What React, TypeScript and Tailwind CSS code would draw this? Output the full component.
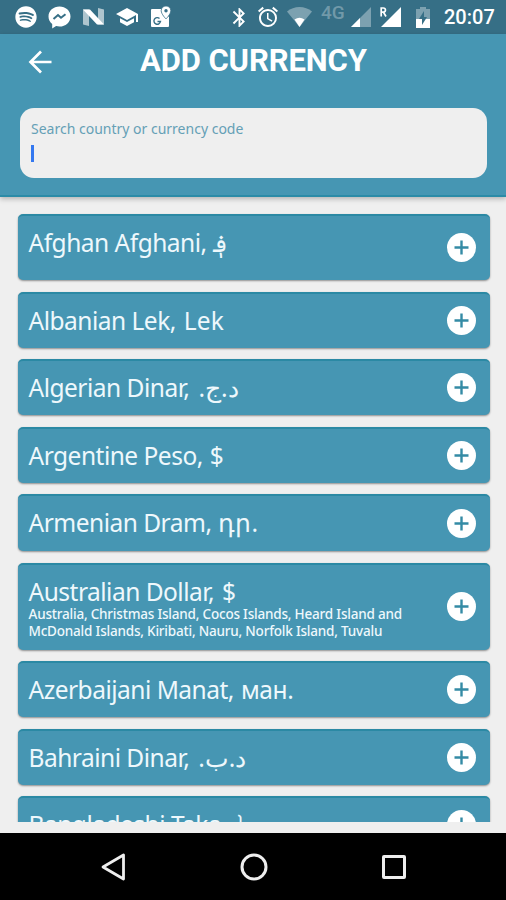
import { FaSpotify } from "react-icons/fa"
import { MdAlarm, MdBluetooth, MdSchool } from "react-icons/md"
import clsx from "clsx"

interface Currency {
  name: string
  symbol: string
  height: string
  symbolStyle?: string
  countries?: string[]
}

const CURRENCIES: Currency[] = [
  { name: "Afghan Afghani,", symbol: "؋", height: "h-[66px]", symbolStyle: "-ml-[1px]" },
  { name: "Albanian Lek,", symbol: "Lek", height: "h-14", symbolStyle: "ml-[1px] tracking-[0.2px]" },
  { name: "Algerian Dinar,", symbol: ".د.ج", height: "h-14", symbolStyle: "ml-[2px] tracking-[0.7px]" },
  { name: "Argentine Peso,", symbol: "$", height: "h-14" },
  { name: "Armenian Dram,", symbol: "դր.", height: "h-[57px]" },
  {
    name: "Australian Dollar,",
    symbol: "$",
    height: "h-[87px]",
    symbolStyle: "ml-[1px]",
    countries: [
      "Australia, Christmas Island, Cocos Islands, Heard Island and",
      "McDonald Islands, Kiribati, Nauru, Norfolk Island, Tuvalu",
    ],
  },
  { name: "Azerbaijani Manat,", symbol: "ман.", height: "h-14", symbolStyle: "tracking-[-0.4px]" },
  { name: "Bahraini Dinar,", symbol: ".د.ب", height: "h-14", symbolStyle: "ml-[2px] tracking-[-0.3px]" },
  { name: "Bangladeshi Taka,", symbol: "৳", height: "h-14", symbolStyle: "ml-[3px] text-[28px]" },
]

function StatusBar() {
  return (
    <div className="flex h-[34px] shrink-0 items-center bg-[#366f86] text-white">
      <FaSpotify className="ml-[15px] size-[22px]" />
      <svg className="ml-[11px] size-[23px]" viewBox="0 0 23 23" fill="none">
        <path d="M11.5.5C5.4.5.5 4.8.5 10.4c0 3 1.4 5.700 3.700 7.500v4.600l3.900-2.400c1.100.3 2.200.4 3.400.4 6.100 0 11-4.500 11-10.100S17.600.5 11.500.5Z" fill="currentColor" />
        <path d="m5.500 13 4.500-4 3 2.700 4.500-3.500" stroke="#366f86" strokeWidth="2" />
      </svg>
      <svg className="ml-3 h-[18px] w-[21px]" viewBox="0 0 21 18">
        <path d="M0 1.500h6V18L0 16.500Z M15 0l6 1.500v15h-6Z" fill="#fff" opacity=".6" />
        <path d="M0 1.500h7L21 16.500h-7Z" fill="#fff" />
      </svg>
      <MdSchool className="ml-[11px] size-[24px]" />
      <svg className="ml-[11px] size-[22px]" viewBox="0 0 22 22" fill="none">
        <path d="M2 3h11l5 8 1-1v10a1 1 0 0 1-1 1H2a1 1 0 0 1-1-1V4a1 1 0 0 1 1-1Z" fill="#fff" />
        <path d="M16 0c-2.700 0-4.800 2-4.800 4.700C11.200 8.100 16 13 16 13s4.800-4.900 4.800-8.300C20.800 2 18.700 0 16 0Z" fill="#fff" stroke="#366f86" strokeWidth=".8" />
        <circle cx="16" cy="4.700" r="1.700" fill="#366f86" />
        <path d="M9.500 12.500a3.300 3.300 0 1 0 1 3H7.500" stroke="#366f86" strokeWidth="1.400" />
      </svg>
      <MdBluetooth className="ml-[56px] size-[23px]" />
      <MdAlarm className="ml-[5px] size-[24px]" />
      <svg className="ml-[7px] h-5 w-[25px]" viewBox="0 0 25 20">
        <path d="M0 4.500C7-1.500 18-1.500 25 4.500L12.500 20Z" fill="#fff" opacity=".35" />
        <path d="M7.500 12.500q5-3.500 10 0L12.500 20Z" fill="#fff" />
      </svg>
      <span className="mb-2 ml-[9px] w-[30px] font-[Roboto] text-[19px] leading-5 font-medium text-[#7199a9]">4G</span>
      <svg className="h-5 w-5" viewBox="0 0 20 20">
        <path d="M20 0v20H0Z" fill="#fff" opacity=".35" />
        <path d="M9 11v9H0Z" fill="#fff" />
      </svg>
      <svg className="ml-[9px] h-5 w-[21px]" viewBox="0 0 21 20" fill="none">
        <path d="M21 0v20H1Z" fill="#fff" />
        <path d="M1.200 9.500V1h2c3 0 3 4.200 0 4.200h-2m2.300 0L6 9.500" stroke="#fff" strokeWidth="1.700" />
      </svg>
      <svg className="ml-[15px] h-[21px] w-[14px]" viewBox="0 0 14 21">
        <path d="M4 0h6v2h4v19H0V2h4Z" fill="#fff" opacity=".35" />
        <path d="M0 12h14v9H0Z" fill="#fff" />
        <path d="M8 4v6h3l-5 8v-6H3Z" fill="#366f86" />
      </svg>
      <span className="ml-[14px] font-[Roboto] text-[20px] leading-6 font-medium whitespace-nowrap">20:07</span>
    </div>
  )
}

function Header() {
  return (
    <header className="z-10 h-[163px] shrink-0 border-b-2 border-[#2b8ba7] bg-[#4696b3] shadow-[0_2px_5px_rgba(0,0,0,0.25)]">
      <div className="flex h-[53px] items-center">
        <svg className="mt-[3px] ml-[28px] h-6 w-6 shrink-0" viewBox="0 0 24 24" fill="none" stroke="#fff" strokeWidth="2.700">
          <path d="M23.500 12H2.500M13 1.500 2.500 12 13 22.500" />
        </svg>
        <h1 className="ml-[88px] font-[Roboto] text-[31px] leading-9 font-bold tracking-[-0.1px] whitespace-nowrap text-white">ADD CURRENCY</h1>
      </div>
      <div className="mt-[21px] mr-[19px] ml-5 h-[70px] rounded-[14px] bg-[#efefef] pt-[11px] pl-[11px]">
        <div className="text-[14px] leading-5 whitespace-nowrap text-[#65a0b6]">Search country or currency code</div>
        <div className="mt-[6px] h-[17px] w-[3px] bg-[#3478f0]" />
      </div>
    </header>
  )
}

function AddButton() {
  return (
    <button className="flex size-[29px] shrink-0 items-center justify-center rounded-full bg-white">
      <svg className="size-[15px]" viewBox="0 0 15 15" stroke="#348ba5" strokeWidth="2.400">
        <path d="M7.500.5v14M.5 7.500h14" />
      </svg>
    </button>
  )
}

function CurrencyRow({ currency }: { currency: Currency }) {
  return (
    <div
      className={clsx(
        "flex shrink-0 items-center justify-between rounded-[5px] border-t-2 border-[#2b89a4] bg-[#4696b3] pr-[14px] pb-[1px] pl-[11px] shadow-[0_1px_2px_rgba(0,0,0,0.4)]",
        currency.height
      )}
    >
      <div className="self-start pt-[10px] whitespace-nowrap text-[#eef8fc]">
        <div className="flex h-[33px] gap-[7px] text-[24.500px] leading-[33px]">
          <span className="tracking-[-0.500px]">{currency.name}</span>
          <bdo dir="ltr" className={clsx("[unicode-bidi:normal]", currency.symbolStyle)}>{currency.symbol}</bdo>
        </div>
        {currency.countries?.map((line) => (
          <div key={line} className="relative -top-[2px] text-[13.500px] leading-[17px] font-medium tracking-[-0.200px]">{line}</div>
        ))}
      </div>
      <AddButton />
    </div>
  )
}

function NavBar() {
  return (
    <nav className="flex h-[67px] shrink-0 items-center bg-black text-[#eee]">
      <svg className="ml-[101px] h-7 w-[25px]" viewBox="0 0 25 28" fill="none" stroke="currentColor" strokeWidth="2.800" strokeLinejoin="round">
        <path d="M22.500 2v24L2 14Z" />
      </svg>
      <svg className="ml-[114px] size-7" viewBox="0 0 28 28" fill="none" stroke="currentColor" strokeWidth="3">
        <circle cx="14" cy="14" r="12" />
      </svg>
      <div className="ml-[114px] size-6 rounded-[2px] border-3 border-current" />
    </nav>
  )
}

export default function App() {
  return (
    <div className="flex h-[900px] w-[506px] flex-col overflow-hidden bg-[#efefef] font-['Noto_Sans',sans-serif]">
      <StatusBar />
      <Header />
      <main className="flex h-[625px] shrink-0 flex-col gap-[11.500px] overflow-hidden pt-[17px] pr-[16px] pl-[17.500px]">
        {CURRENCIES.map((currency) => (
          <CurrencyRow key={currency.name} currency={currency} />
        ))}
      </main>
      <div className="h-[11px] shrink-0" />
      <NavBar />
    </div>
  )
}
